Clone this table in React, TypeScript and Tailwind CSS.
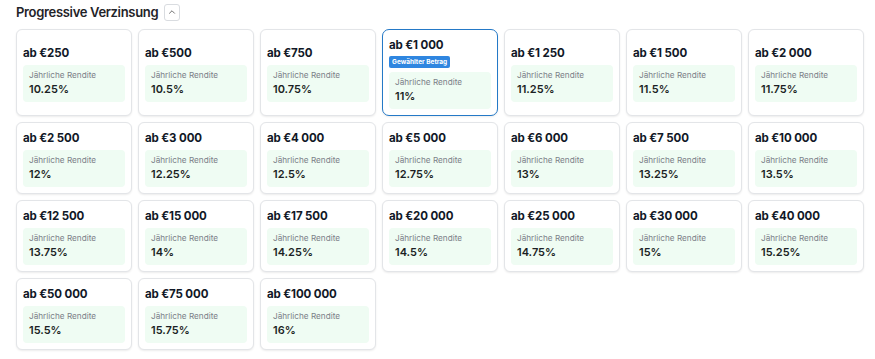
import { ChevronUp } from "lucide-react";

const TIERS: { amount: string; rate: string }[] = [
  { amount: "€250", rate: "10.25%" },
  { amount: "€500", rate: "10.5%" },
  { amount: "€750", rate: "10.75%" },
  { amount: "€1 000", rate: "11%" },
  { amount: "€1 250", rate: "11.25%" },
  { amount: "€1 500", rate: "11.5%" },
  { amount: "€2 000", rate: "11.75%" },
  { amount: "€2 500", rate: "12%" },
  { amount: "€3 000", rate: "12.25%" },
  { amount: "€4 000", rate: "12.5%" },
  { amount: "€5 000", rate: "12.75%" },
  { amount: "€6 000", rate: "13%" },
  { amount: "€7 500", rate: "13.25%" },
  { amount: "€10 000", rate: "13.5%" },
  { amount: "€12 500", rate: "13.75%" },
  { amount: "€15 000", rate: "14%" },
  { amount: "€17 500", rate: "14.25%" },
  { amount: "€20 000", rate: "14.5%" },
  { amount: "€25 000", rate: "14.75%" },
  { amount: "€30 000", rate: "15%" },
  { amount: "€40 000", rate: "15.25%" },
  { amount: "€50 000", rate: "15.5%" },
  { amount: "€75 000", rate: "15.75%" },
  { amount: "€100 000", rate: "16%" },
];

const SELECTED = "€1 000";

function TierCard({ amount, rate }: { amount: string; rate: string }) {
  const active = amount === SELECTED;
  return (
    <div
      className={`flex flex-col justify-center bg-white p-[6px] shadow-[0_1px_2px_rgba(0,0,0,0.08)] ${
        active
          ? "rounded-[7px] border-[1.5px] border-[#2479c7]"
          : "rounded-md border border-[#e3e5e8]"
      }`}
    >
      <div className="text-[11.5px] font-bold leading-[18px] tracking-[-0.01em] text-[#111827]">
        ab {amount}
      </div>
      {active && (
        <div className="mt-[2px] h-3 w-fit rounded-[2px] bg-[#2f86e0] px-[3px] text-[6.5px] font-bold leading-[12px] text-white">
          Gewählter Betrag
        </div>
      )}
      <div
        className={`${active ? "mt-[4px]" : "mt-[3px]"} rounded-[4px] bg-[#effcf3] px-[6px] py-[4px]`}
      >
        <div className="text-[8.2px] leading-[12px] text-[#7b8088]">Jährliche Rendite</div>
        <div className="text-[11px] font-semibold leading-[17px] text-[#1b1f24]">{rate}</div>
      </div>
    </div>
  );
}

export default function App() {
  return (
    <div className="h-[359px] w-[875px] bg-white font-['Inter',sans-serif]">
      <div className="flex items-center gap-[6px] px-4 pt-[3px]">
        <h2 className="text-[13px] font-semibold leading-[18px] tracking-[-0.025em] text-[#1f2328]">
          Progressive Verzinsung
        </h2>
        <button
          type="button"
          className="flex h-[17px] w-[16px] items-center justify-center rounded-[3px] border border-[#d9dce0] bg-white text-[#555]"
        >
          <ChevronUp size={10} strokeWidth={2} />
        </button>
      </div>
      <div className="mt-[8px] grid w-[864px] grid-cols-7 gap-1.5 pl-4">
        {TIERS.map((t) => (
          <TierCard key={t.amount} amount={t.amount} rate={t.rate} />
        ))}
      </div>
    </div>
  );
}
